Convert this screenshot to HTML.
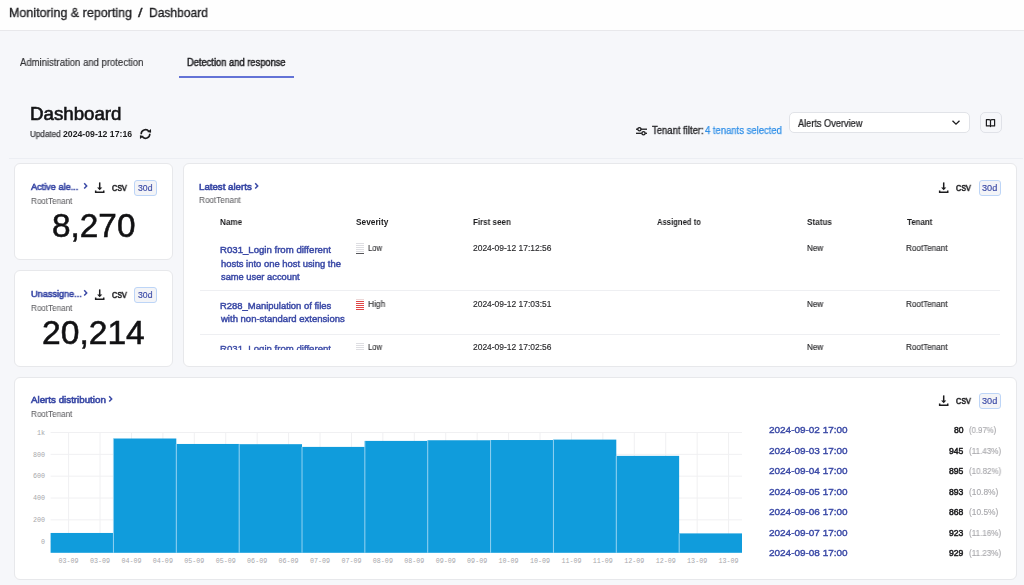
<!DOCTYPE html>
<html><head><meta charset="utf-8"><style>
html,body{margin:0;padding:0;}
body{width:1024px;height:585px;overflow:hidden;position:relative;background:#f6f7fa;font-family:"Liberation Sans",sans-serif;}
.t{position:absolute;white-space:pre;transform-origin:0 0;will-change:transform;}
.card{position:absolute;background:#fff;border:1px solid #e7e8eb;border-radius:6px;box-sizing:border-box;}
</style></head><body>
<div style="position:absolute;left:0;top:0;width:1024px;height:30px;background:#fefefe;border-bottom:1px solid #e8e8eb"></div>
<div style="position:absolute;left:179.2px;top:76px;width:114.5px;height:1.5px;background:#6373d6"></div>
<div style="position:absolute;left:9px;top:158px;width:1014px;height:1px;background:#eceef3"></div>
<svg style="position:absolute;left:139px;top:128px" width="13" height="12" viewBox="0 0 13 12"><path d="M2.2 6.2A4.3 4.3 0 0 1 9.9 3.4" stroke="#1c1c1e" stroke-width="1.6" fill="none"/><path d="M8.2 3.9L12.1 4.7L12.0 0.9Z" fill="#1c1c1e"/><path d="M10.8 5.8A4.3 4.3 0 0 1 3.1 8.6" stroke="#1c1c1e" stroke-width="1.6" fill="none"/><path d="M4.8 8.1L0.9 7.3L1.0 11.1Z" fill="#1c1c1e"/></svg>
<svg style="position:absolute;left:635px;top:126px" width="13" height="10" viewBox="0 0 13 10"><path d="M1 3.2H12" stroke="#1c1c1e" stroke-width="1.3"/><circle cx="4.4" cy="3.2" r="1.6" fill="#f6f7fa" stroke="#1c1c1e" stroke-width="1.3"/><path d="M1 7.3H12" stroke="#1c1c1e" stroke-width="1.3"/><circle cx="8.5" cy="7.3" r="1.6" fill="#f6f7fa" stroke="#1c1c1e" stroke-width="1.3"/></svg>
<div style="position:absolute;left:789px;top:112px;width:181px;height:21px;box-sizing:border-box;background:#fff;border:1px solid #e1e3e8;border-radius:5px"></div>
<svg style="position:absolute;left:951px;top:119px" width="10" height="7" viewBox="0 0 10 7"><path d="M1.5 1.7L5 5.2L8.5 1.7" stroke="#1c1c1e" stroke-width="1.3" fill="none"/></svg>
<div style="position:absolute;left:980px;top:112px;width:22px;height:21px;box-sizing:border-box;background:#f6f7fa;border:1px solid #e0e2e8;border-radius:5px"></div>
<svg style="position:absolute;left:985px;top:118px" width="11" height="10" viewBox="0 0 11 10"><path d="M1.4 1.6H4.2Q5.5 1.6 5.5 2.9V8.6Q5.5 7.9 4.2 7.9H1.4Z M9.6 1.6H6.8Q5.5 1.6 5.5 2.9V8.6Q5.5 7.9 6.8 7.9H9.6Z" stroke="#1c1c1e" stroke-width="1.2" fill="none" stroke-linejoin="round"/></svg>

<div class="card" style="left:14px;top:163px;width:159px;height:97px"></div>
<div class="card" style="left:14px;top:270px;width:159px;height:97px"></div>
<div class="card" style="left:183px;top:163px;width:834px;height:204px"></div>
<div class="card" style="left:14px;top:377px;width:1003px;height:203px"></div>

<svg style="position:absolute;left:83.0px;top:182.2px" width="5" height="8" viewBox="0 0 5 8"><path d="M1.2 1.2L3.7 3.9L1.2 6.6" stroke="#3a49a6" stroke-width="1.5" fill="none"/></svg><svg style="position:absolute;left:93.6px;top:181.6px" width="12" height="12" viewBox="0 0 12 12"><path d="M5.7 0.4V6.4" stroke="#1c1c1e" stroke-width="1.5" fill="none"/><path d="M3.1 5.5L5.7 8.3L8.3 5.5Z" fill="#1c1c1e"/><path d="M1.65 8.4V10.15H9.75V8.4" stroke="#1c1c1e" stroke-width="1.5" fill="none"/></svg><div style="position:absolute;left:134.2px;top:179.9px;width:22.6px;height:16.2px;box-sizing:border-box;border:1px solid #bdd5f7;border-radius:3px;background:#f3f4f7"></div>
<svg style="position:absolute;left:83.0px;top:289.2px" width="5" height="8" viewBox="0 0 5 8"><path d="M1.2 1.2L3.7 3.9L1.2 6.6" stroke="#3a49a6" stroke-width="1.5" fill="none"/></svg><svg style="position:absolute;left:93.6px;top:288.6px" width="12" height="12" viewBox="0 0 12 12"><path d="M5.7 0.4V6.4" stroke="#1c1c1e" stroke-width="1.5" fill="none"/><path d="M3.1 5.5L5.7 8.3L8.3 5.5Z" fill="#1c1c1e"/><path d="M1.65 8.4V10.15H9.75V8.4" stroke="#1c1c1e" stroke-width="1.5" fill="none"/></svg><div style="position:absolute;left:134.2px;top:286.9px;width:22.6px;height:16.2px;box-sizing:border-box;border:1px solid #bdd5f7;border-radius:3px;background:#f3f4f7"></div>
<svg style="position:absolute;left:253.5px;top:182.4px" width="5" height="8" viewBox="0 0 5 8"><path d="M1.2 1.2L3.7 3.9L1.2 6.6" stroke="#3a49a6" stroke-width="1.5" fill="none"/></svg><svg style="position:absolute;left:938.2px;top:181.6px" width="12" height="12" viewBox="0 0 12 12"><path d="M5.7 0.4V6.4" stroke="#1c1c1e" stroke-width="1.5" fill="none"/><path d="M3.1 5.5L5.7 8.3L8.3 5.5Z" fill="#1c1c1e"/><path d="M1.65 8.4V10.15H9.75V8.4" stroke="#1c1c1e" stroke-width="1.5" fill="none"/></svg><div style="position:absolute;left:978.6px;top:180.0px;width:22.6px;height:16.2px;box-sizing:border-box;border:1px solid #bdd5f7;border-radius:3px;background:#f3f4f7"></div>
<svg style="position:absolute;left:108.3px;top:395.3px" width="5" height="8" viewBox="0 0 5 8"><path d="M1.2 1.2L3.7 3.9L1.2 6.6" stroke="#3a49a6" stroke-width="1.5" fill="none"/></svg><svg style="position:absolute;left:938.2px;top:395.0px" width="12" height="12" viewBox="0 0 12 12"><path d="M5.7 0.4V6.4" stroke="#1c1c1e" stroke-width="1.5" fill="none"/><path d="M3.1 5.5L5.7 8.3L8.3 5.5Z" fill="#1c1c1e"/><path d="M1.65 8.4V10.15H9.75V8.4" stroke="#1c1c1e" stroke-width="1.5" fill="none"/></svg><div style="position:absolute;left:978.6px;top:393.2px;width:22.6px;height:16.2px;box-sizing:border-box;border:1px solid #bdd5f7;border-radius:3px;background:#f3f4f7"></div>

<div style="position:absolute;left:200px;top:290.3px;width:800px;height:1px;background:#eeeff2"></div>
<div style="position:absolute;left:200px;top:334px;width:800px;height:1px;background:#eeeff2"></div>

<div style="position:absolute;left:356px;top:243px;width:8px;height:1px;background:#dedee2"></div><div style="position:absolute;left:356px;top:245px;width:8px;height:1px;background:#dedee2"></div><div style="position:absolute;left:356px;top:247px;width:8px;height:1px;background:#dedee2"></div><div style="position:absolute;left:356px;top:249px;width:8px;height:1px;background:#dedee2"></div><div style="position:absolute;left:356px;top:251px;width:8px;height:1px;background:#dedee2"></div><div style="position:absolute;left:356px;top:253px;width:8px;height:1px;background:#56565a"></div><div style="position:absolute;left:356px;top:299px;width:8px;height:1px;background:#ecd6d6"></div><div style="position:absolute;left:356px;top:301px;width:8px;height:1px;background:#e04646"></div><div style="position:absolute;left:356px;top:303px;width:8px;height:1px;background:#e04646"></div><div style="position:absolute;left:356px;top:305px;width:8px;height:1px;background:#e04646"></div><div style="position:absolute;left:356px;top:307px;width:8px;height:1px;background:#e04646"></div><div style="position:absolute;left:356px;top:309px;width:8px;height:1px;background:#e04646"></div><div style="position:absolute;left:356px;top:343px;width:8px;height:1px;background:#dedee2"></div><div style="position:absolute;left:356px;top:345px;width:8px;height:1px;background:#dedee2"></div><div style="position:absolute;left:356px;top:347px;width:8px;height:1px;background:#dedee2"></div><div style="position:absolute;left:356px;top:349px;width:8px;height:1px;background:#dedee2"></div>

<svg width="1024" height="585" style="position:absolute;left:0;top:0">
<line x1="50.6" y1="432.50" x2="742.0" y2="432.50" stroke="#f0f0f2" stroke-width="1"/>
<line x1="50.6" y1="454.34" x2="742.0" y2="454.34" stroke="#f0f0f2" stroke-width="1"/>
<line x1="50.6" y1="476.18" x2="742.0" y2="476.18" stroke="#f0f0f2" stroke-width="1"/>
<line x1="50.6" y1="498.02" x2="742.0" y2="498.02" stroke="#f0f0f2" stroke-width="1"/>
<line x1="50.6" y1="519.86" x2="742.0" y2="519.86" stroke="#f0f0f2" stroke-width="1"/>
<line x1="50.6" y1="541.70" x2="742.0" y2="541.70" stroke="#f0f0f2" stroke-width="1"/>
<line x1="68.60" y1="432.5" x2="68.60" y2="552.8" stroke="#f0f0f2" stroke-width="1"/>
<line x1="100.03" y1="432.5" x2="100.03" y2="552.8" stroke="#f0f0f2" stroke-width="1"/>
<line x1="131.45" y1="432.5" x2="131.45" y2="552.8" stroke="#f0f0f2" stroke-width="1"/>
<line x1="162.88" y1="432.5" x2="162.88" y2="552.8" stroke="#f0f0f2" stroke-width="1"/>
<line x1="194.31" y1="432.5" x2="194.31" y2="552.8" stroke="#f0f0f2" stroke-width="1"/>
<line x1="225.74" y1="432.5" x2="225.74" y2="552.8" stroke="#f0f0f2" stroke-width="1"/>
<line x1="257.16" y1="432.5" x2="257.16" y2="552.8" stroke="#f0f0f2" stroke-width="1"/>
<line x1="288.59" y1="432.5" x2="288.59" y2="552.8" stroke="#f0f0f2" stroke-width="1"/>
<line x1="320.02" y1="432.5" x2="320.02" y2="552.8" stroke="#f0f0f2" stroke-width="1"/>
<line x1="351.45" y1="432.5" x2="351.45" y2="552.8" stroke="#f0f0f2" stroke-width="1"/>
<line x1="382.87" y1="432.5" x2="382.87" y2="552.8" stroke="#f0f0f2" stroke-width="1"/>
<line x1="414.30" y1="432.5" x2="414.30" y2="552.8" stroke="#f0f0f2" stroke-width="1"/>
<line x1="445.73" y1="432.5" x2="445.73" y2="552.8" stroke="#f0f0f2" stroke-width="1"/>
<line x1="477.15" y1="432.5" x2="477.15" y2="552.8" stroke="#f0f0f2" stroke-width="1"/>
<line x1="508.58" y1="432.5" x2="508.58" y2="552.8" stroke="#f0f0f2" stroke-width="1"/>
<line x1="540.01" y1="432.5" x2="540.01" y2="552.8" stroke="#f0f0f2" stroke-width="1"/>
<line x1="571.44" y1="432.5" x2="571.44" y2="552.8" stroke="#f0f0f2" stroke-width="1"/>
<line x1="602.86" y1="432.5" x2="602.86" y2="552.8" stroke="#f0f0f2" stroke-width="1"/>
<line x1="634.29" y1="432.5" x2="634.29" y2="552.8" stroke="#f0f0f2" stroke-width="1"/>
<line x1="665.72" y1="432.5" x2="665.72" y2="552.8" stroke="#f0f0f2" stroke-width="1"/>
<line x1="697.15" y1="432.5" x2="697.15" y2="552.8" stroke="#f0f0f2" stroke-width="1"/>
<line x1="728.57" y1="432.5" x2="728.57" y2="552.8" stroke="#f0f0f2" stroke-width="1"/>
<rect x="50.60" y="532.96" width="62.85" height="19.84" fill="#109cdc"/>
<rect x="113.45" y="438.51" width="62.85" height="114.29" fill="#109cdc"/>
<line x1="113.45" y1="438.51" x2="113.45" y2="552.8" stroke="#8fd0f0" stroke-width="1"/>
<rect x="176.31" y="443.97" width="62.85" height="108.83" fill="#109cdc"/>
<line x1="176.31" y1="443.97" x2="176.31" y2="552.8" stroke="#8fd0f0" stroke-width="1"/>
<rect x="239.16" y="444.18" width="62.85" height="108.62" fill="#109cdc"/>
<line x1="239.16" y1="444.18" x2="239.16" y2="552.8" stroke="#8fd0f0" stroke-width="1"/>
<rect x="302.02" y="446.91" width="62.85" height="105.89" fill="#109cdc"/>
<line x1="302.02" y1="446.91" x2="302.02" y2="552.8" stroke="#8fd0f0" stroke-width="1"/>
<rect x="364.87" y="440.91" width="62.85" height="111.89" fill="#109cdc"/>
<line x1="364.87" y1="440.91" x2="364.87" y2="552.8" stroke="#8fd0f0" stroke-width="1"/>
<rect x="427.73" y="440.25" width="62.85" height="112.55" fill="#109cdc"/>
<line x1="427.73" y1="440.25" x2="427.73" y2="552.8" stroke="#8fd0f0" stroke-width="1"/>
<rect x="490.58" y="440.03" width="62.85" height="112.77" fill="#109cdc"/>
<line x1="490.58" y1="440.03" x2="490.58" y2="552.8" stroke="#8fd0f0" stroke-width="1"/>
<rect x="553.44" y="439.60" width="62.85" height="113.20" fill="#109cdc"/>
<line x1="553.44" y1="439.60" x2="553.44" y2="552.8" stroke="#8fd0f0" stroke-width="1"/>
<rect x="616.29" y="455.87" width="62.85" height="96.93" fill="#109cdc"/>
<line x1="616.29" y1="455.87" x2="616.29" y2="552.8" stroke="#8fd0f0" stroke-width="1"/>
<rect x="679.15" y="533.40" width="62.85" height="19.40" fill="#109cdc"/>
<line x1="679.15" y1="533.40" x2="679.15" y2="552.8" stroke="#8fd0f0" stroke-width="1"/>
<text x="45" y="434.80" text-anchor="end" font-family="Liberation Mono" font-size="6.7" fill="#a8a8ac">1k</text>
<text x="45" y="456.64" text-anchor="end" font-family="Liberation Mono" font-size="6.7" fill="#a8a8ac">800</text>
<text x="45" y="478.48" text-anchor="end" font-family="Liberation Mono" font-size="6.7" fill="#a8a8ac">600</text>
<text x="45" y="500.32" text-anchor="end" font-family="Liberation Mono" font-size="6.7" fill="#a8a8ac">400</text>
<text x="45" y="522.16" text-anchor="end" font-family="Liberation Mono" font-size="6.7" fill="#a8a8ac">200</text>
<text x="45" y="544.00" text-anchor="end" font-family="Liberation Mono" font-size="6.7" fill="#a8a8ac">0</text>
<text x="68.60" y="563" text-anchor="middle" font-family="Liberation Mono" font-size="6.7" fill="#a8a8ac">03-09</text>
<text x="100.03" y="563" text-anchor="middle" font-family="Liberation Mono" font-size="6.7" fill="#a8a8ac">03-09</text>
<text x="131.45" y="563" text-anchor="middle" font-family="Liberation Mono" font-size="6.7" fill="#a8a8ac">04-09</text>
<text x="162.88" y="563" text-anchor="middle" font-family="Liberation Mono" font-size="6.7" fill="#a8a8ac">04-09</text>
<text x="194.31" y="563" text-anchor="middle" font-family="Liberation Mono" font-size="6.7" fill="#a8a8ac">05-09</text>
<text x="225.74" y="563" text-anchor="middle" font-family="Liberation Mono" font-size="6.7" fill="#a8a8ac">05-09</text>
<text x="257.16" y="563" text-anchor="middle" font-family="Liberation Mono" font-size="6.7" fill="#a8a8ac">06-09</text>
<text x="288.59" y="563" text-anchor="middle" font-family="Liberation Mono" font-size="6.7" fill="#a8a8ac">06-09</text>
<text x="320.02" y="563" text-anchor="middle" font-family="Liberation Mono" font-size="6.7" fill="#a8a8ac">07-09</text>
<text x="351.45" y="563" text-anchor="middle" font-family="Liberation Mono" font-size="6.7" fill="#a8a8ac">07-09</text>
<text x="382.87" y="563" text-anchor="middle" font-family="Liberation Mono" font-size="6.7" fill="#a8a8ac">08-09</text>
<text x="414.30" y="563" text-anchor="middle" font-family="Liberation Mono" font-size="6.7" fill="#a8a8ac">08-09</text>
<text x="445.73" y="563" text-anchor="middle" font-family="Liberation Mono" font-size="6.7" fill="#a8a8ac">09-09</text>
<text x="477.15" y="563" text-anchor="middle" font-family="Liberation Mono" font-size="6.7" fill="#a8a8ac">09-09</text>
<text x="508.58" y="563" text-anchor="middle" font-family="Liberation Mono" font-size="6.7" fill="#a8a8ac">10-09</text>
<text x="540.01" y="563" text-anchor="middle" font-family="Liberation Mono" font-size="6.7" fill="#a8a8ac">10-09</text>
<text x="571.44" y="563" text-anchor="middle" font-family="Liberation Mono" font-size="6.7" fill="#a8a8ac">11-09</text>
<text x="602.86" y="563" text-anchor="middle" font-family="Liberation Mono" font-size="6.7" fill="#a8a8ac">11-09</text>
<text x="634.29" y="563" text-anchor="middle" font-family="Liberation Mono" font-size="6.7" fill="#a8a8ac">12-09</text>
<text x="665.72" y="563" text-anchor="middle" font-family="Liberation Mono" font-size="6.7" fill="#a8a8ac">12-09</text>
<text x="697.15" y="563" text-anchor="middle" font-family="Liberation Mono" font-size="6.7" fill="#a8a8ac">13-09</text>
<text x="728.57" y="563" text-anchor="middle" font-family="Liberation Mono" font-size="6.7" fill="#a8a8ac">13-09</text>
</svg>
<div class="t" style="left:8.74px;top:5.70px;font-size:13px;line-height:13px;color:#1f1f22;transform:scaleX(0.9614);-webkit-text-stroke:0.35px #1f1f22;">Monitoring &amp; reporting</div>
<div class="t" style="left:137.90px;top:5.70px;font-size:13px;line-height:13px;color:#1f1f22;transform:scaleX(1.2432);-webkit-text-stroke:0.35px #1f1f22;">/</div>
<div class="t" style="left:148.97px;top:5.70px;font-size:13px;line-height:13px;color:#1f1f22;transform:scaleX(0.9277);-webkit-text-stroke:0.35px #1f1f22;">Dashboard</div>
<div class="t" style="left:20.30px;top:57.50px;font-size:10px;line-height:10px;color:#2e2e31;transform:scaleX(0.9523);-webkit-text-stroke:0.15px #2e2e31;">Administration and protection</div>
<div class="t" style="left:186.90px;top:57.80px;font-size:10px;line-height:10px;color:#1f1f22;transform:scaleX(0.9333);-webkit-text-stroke:0.45px #1f1f22;">Detection and response</div>
<div class="t" style="left:29.99px;top:104.60px;font-size:18.3px;line-height:18.3px;color:#141416;transform:scaleX(1.0231);-webkit-text-stroke:0.60px #141416;">Dashboard</div>
<div class="t" style="left:30.39px;top:130.20px;font-size:8.7px;line-height:8.7px;color:#3c3c40;transform:scaleX(0.9322);-webkit-text-stroke:0.25px #3c3c40;">Updated</div>
<div class="t" style="left:62.90px;top:130.20px;font-size:8.7px;line-height:8.7px;color:#1c1c1e;font-weight:700;">2024-09-12 17:16</div>
<div class="t" style="left:651.79px;top:125.75px;font-size:10px;line-height:10px;color:#222225;transform:scaleX(0.9486);-webkit-text-stroke:0.30px #222225;">Tenant filter:</div>
<div class="t" style="left:704.86px;top:125.75px;font-size:10px;line-height:10px;color:#2f8fe8;transform:scaleX(0.9471);-webkit-text-stroke:0.25px #2f8fe8;">4 tenants selected</div>
<div class="t" style="left:797.54px;top:117.60px;font-size:10.5px;line-height:10.5px;color:#222225;transform:scaleX(0.8749);-webkit-text-stroke:0.23px #222225;">Alerts Overview</div>
<div class="t" style="left:31.23px;top:182.20px;font-size:9.5px;line-height:9.5px;color:#3a49a6;transform:scaleX(0.9624);-webkit-text-stroke:0.60px #3a49a6;">Active ale...</div>
<div class="t" style="left:111.81px;top:183.70px;font-size:8.5px;line-height:8.5px;color:#2a2a2d;transform:scaleX(0.8476);-webkit-text-stroke:0.65px #2a2a2d;">CSV</div>
<div class="t" style="left:138.30px;top:183.80px;font-size:8.7px;line-height:8.7px;color:#3a49a6;transform:scaleX(0.9944);-webkit-text-stroke:0.15px #3a49a6;">30d</div>
<div class="t" style="left:30.98px;top:196.70px;font-size:8.5px;line-height:8.5px;color:#5c5c60;transform:scaleX(0.9506);-webkit-text-stroke:0.05px #5c5c60;">RootTenant</div>
<div class="t" style="left:51.66px;top:210.10px;font-size:32.9px;line-height:32.9px;color:#111113;transform:scaleX(1.0139);-webkit-text-stroke:0.55px #111113;">8,270</div>
<div class="t" style="left:30.55px;top:289.20px;font-size:9.5px;line-height:9.5px;color:#3a49a6;transform:scaleX(0.9626);-webkit-text-stroke:0.60px #3a49a6;">Unassigne...</div>
<div class="t" style="left:111.81px;top:290.70px;font-size:8.5px;line-height:8.5px;color:#2a2a2d;transform:scaleX(0.8476);-webkit-text-stroke:0.65px #2a2a2d;">CSV</div>
<div class="t" style="left:138.30px;top:290.80px;font-size:8.7px;line-height:8.7px;color:#3a49a6;transform:scaleX(0.9944);-webkit-text-stroke:0.15px #3a49a6;">30d</div>
<div class="t" style="left:30.98px;top:303.70px;font-size:8.5px;line-height:8.5px;color:#5c5c60;transform:scaleX(0.9506);-webkit-text-stroke:0.05px #5c5c60;">RootTenant</div>
<div class="t" style="left:42.02px;top:317.10px;font-size:32.9px;line-height:32.9px;color:#111113;transform:scaleX(1.0217);-webkit-text-stroke:0.55px #111113;">20,214</div>
<div class="t" style="left:199.31px;top:182.20px;font-size:9.5px;line-height:9.5px;color:#3a49a6;transform:scaleX(1.0187);-webkit-text-stroke:0.60px #3a49a6;">Latest alerts</div>
<div class="t" style="left:199.17px;top:196.30px;font-size:8.5px;line-height:8.5px;color:#5c5c60;transform:scaleX(0.9600);-webkit-text-stroke:0.05px #5c5c60;">RootTenant</div>
<div class="t" style="left:955.91px;top:183.70px;font-size:8.5px;line-height:8.5px;color:#2a2a2d;transform:scaleX(0.8476);-webkit-text-stroke:0.65px #2a2a2d;">CSV</div>
<div class="t" style="left:982.28px;top:183.80px;font-size:8.7px;line-height:8.7px;color:#3a49a6;transform:scaleX(1.0529);-webkit-text-stroke:0.15px #3a49a6;">30d</div>
<div class="t" style="left:220.41px;top:217.70px;font-size:8.3px;line-height:8.3px;color:#1c1c1e;font-weight:700;transform:scaleX(0.9776);">Name</div>
<div class="t" style="left:356.40px;top:217.70px;font-size:8.3px;line-height:8.3px;color:#1c1c1e;font-weight:700;transform:scaleX(0.9943);">Severity</div>
<div class="t" style="left:472.72px;top:217.70px;font-size:8.3px;line-height:8.3px;color:#1c1c1e;font-weight:700;transform:scaleX(0.9623);">First seen</div>
<div class="t" style="left:657.02px;top:217.70px;font-size:8.3px;line-height:8.3px;color:#1c1c1e;font-weight:700;transform:scaleX(0.9229);">Assigned to</div>
<div class="t" style="left:807.40px;top:217.70px;font-size:8.3px;line-height:8.3px;color:#1c1c1e;font-weight:700;transform:scaleX(0.9779);">Status</div>
<div class="t" style="left:907.00px;top:217.70px;font-size:8.3px;line-height:8.3px;color:#1c1c1e;font-weight:700;transform:scaleX(0.9500);">Tenant</div>
<div class="t" style="left:220.42px;top:246.40px;font-size:9.2px;line-height:9.2px;color:#3a49a6;transform:scaleX(1.0460);-webkit-text-stroke:0.45px #3a49a6;">R031_Login from different</div>
<div class="t" style="left:220.54px;top:259.70px;font-size:9.2px;line-height:9.2px;color:#3a49a6;transform:scaleX(1.0249);-webkit-text-stroke:0.45px #3a49a6;">hosts into one host using the</div>
<div class="t" style="left:220.95px;top:272.80px;font-size:9.2px;line-height:9.2px;color:#3a49a6;transform:scaleX(1.0133);-webkit-text-stroke:0.45px #3a49a6;">same user account</div>
<div class="t" style="left:368.35px;top:244.20px;font-size:8.6px;line-height:8.6px;color:#2a2a2d;transform:scaleX(0.8935);-webkit-text-stroke:0.10px #2a2a2d;">Low</div>
<div class="t" style="left:472.79px;top:243.80px;font-size:8.3px;line-height:8.3px;color:#2a2a2d;transform:scaleX(1.0176);-webkit-text-stroke:0.15px #2a2a2d;">2024-09-12 17:12:56</div>
<div class="t" style="left:807.02px;top:243.80px;font-size:8.3px;line-height:8.3px;color:#2a2a2d;transform:scaleX(0.9745);-webkit-text-stroke:0.15px #2a2a2d;">New</div>
<div class="t" style="left:906.41px;top:243.80px;font-size:8.3px;line-height:8.3px;color:#2a2a2d;transform:scaleX(0.9774);-webkit-text-stroke:0.15px #2a2a2d;">RootTenant</div>
<div class="t" style="left:220.43px;top:302.20px;font-size:9.2px;line-height:9.2px;color:#3a49a6;transform:scaleX(1.0277);-webkit-text-stroke:0.45px #3a49a6;">R288_Manipulation of files</div>
<div class="t" style="left:221.25px;top:315.30px;font-size:9.2px;line-height:9.2px;color:#3a49a6;transform:scaleX(1.0354);-webkit-text-stroke:0.45px #3a49a6;">with non-standard extensions</div>
<div class="t" style="left:368.29px;top:300.30px;font-size:8.6px;line-height:8.6px;color:#2a2a2d;transform:scaleX(0.9725);-webkit-text-stroke:0.10px #2a2a2d;">High</div>
<div class="t" style="left:472.79px;top:299.80px;font-size:8.3px;line-height:8.3px;color:#2a2a2d;transform:scaleX(1.0176);-webkit-text-stroke:0.15px #2a2a2d;">2024-09-12 17:03:51</div>
<div class="t" style="left:807.02px;top:299.80px;font-size:8.3px;line-height:8.3px;color:#2a2a2d;transform:scaleX(0.9745);-webkit-text-stroke:0.15px #2a2a2d;">New</div>
<div class="t" style="left:906.41px;top:299.80px;font-size:8.3px;line-height:8.3px;color:#2a2a2d;transform:scaleX(0.9774);-webkit-text-stroke:0.15px #2a2a2d;">RootTenant</div>
<div class="t" style="left:220.37px;top:345.30px;font-size:9.2px;line-height:9.2px;color:#3a49a6;transform:scaleX(1.0469);-webkit-text-stroke:0.35px #3a49a6;height:5.10px;overflow:hidden;">R031_Login from different</div>
<div class="t" style="left:368.35px;top:343.20px;font-size:8.6px;line-height:8.6px;color:#2a2a2d;transform:scaleX(0.8935);-webkit-text-stroke:0.10px #2a2a2d;">Low</div>
<div class="t" style="left:472.79px;top:342.90px;font-size:8.3px;line-height:8.3px;color:#2a2a2d;transform:scaleX(1.0176);-webkit-text-stroke:0.15px #2a2a2d;">2024-09-12 17:02:56</div>
<div class="t" style="left:807.02px;top:342.90px;font-size:8.3px;line-height:8.3px;color:#2a2a2d;transform:scaleX(0.9745);-webkit-text-stroke:0.15px #2a2a2d;">New</div>
<div class="t" style="left:906.41px;top:342.90px;font-size:8.3px;line-height:8.3px;color:#2a2a2d;transform:scaleX(0.9774);-webkit-text-stroke:0.15px #2a2a2d;">RootTenant</div>
<div class="t" style="left:31.12px;top:395.40px;font-size:9.5px;line-height:9.5px;color:#3a49a6;transform:scaleX(1.0272);-webkit-text-stroke:0.60px #3a49a6;">Alerts distribution</div>
<div class="t" style="left:30.98px;top:409.70px;font-size:8.5px;line-height:8.5px;color:#5c5c60;transform:scaleX(0.9506);-webkit-text-stroke:0.05px #5c5c60;">RootTenant</div>
<div class="t" style="left:955.91px;top:396.75px;font-size:8.5px;line-height:8.5px;color:#2a2a2d;transform:scaleX(0.8476);-webkit-text-stroke:0.65px #2a2a2d;">CSV</div>
<div class="t" style="left:982.28px;top:396.90px;font-size:8.7px;line-height:8.7px;color:#3a49a6;transform:scaleX(1.0529);-webkit-text-stroke:0.15px #3a49a6;">30d</div>
<div class="t" style="left:768.81px;top:425.30px;font-size:9.7px;line-height:9.7px;color:#3a49a6;transform:scaleX(1.0271);-webkit-text-stroke:0.40px #3a49a6;">2024-09-02 17:00</div>
<div class="t" style="left:954.14px;top:426.10px;font-size:8.6px;line-height:8.6px;color:#1c1c1e;-webkit-text-stroke:0.50px #1c1c1e;">80</div>
<div class="t" style="left:968.74px;top:426.10px;font-size:8.4px;line-height:8.4px;color:#a9a9ad;transform:scaleX(0.9291);-webkit-text-stroke:0.15px #a9a9ad;">(0.97%)</div>
<div class="t" style="left:768.81px;top:445.83px;font-size:9.7px;line-height:9.7px;color:#3a49a6;transform:scaleX(1.0271);-webkit-text-stroke:0.40px #3a49a6;">2024-09-03 17:00</div>
<div class="t" style="left:949.36px;top:446.63px;font-size:8.6px;line-height:8.6px;color:#1c1c1e;-webkit-text-stroke:0.50px #1c1c1e;">945</div>
<div class="t" style="left:968.72px;top:446.63px;font-size:8.4px;line-height:8.4px;color:#a9a9ad;transform:scaleX(0.9642);-webkit-text-stroke:0.15px #a9a9ad;">(11.43%)</div>
<div class="t" style="left:768.81px;top:466.36px;font-size:9.7px;line-height:9.7px;color:#3a49a6;transform:scaleX(1.0271);-webkit-text-stroke:0.40px #3a49a6;">2024-09-04 17:00</div>
<div class="t" style="left:949.36px;top:467.16px;font-size:8.6px;line-height:8.6px;color:#1c1c1e;-webkit-text-stroke:0.50px #1c1c1e;">895</div>
<div class="t" style="left:968.73px;top:467.16px;font-size:8.4px;line-height:8.4px;color:#a9a9ad;transform:scaleX(0.9460);-webkit-text-stroke:0.15px #a9a9ad;">(10.82%)</div>
<div class="t" style="left:768.81px;top:486.89px;font-size:9.7px;line-height:9.7px;color:#3a49a6;transform:scaleX(1.0271);-webkit-text-stroke:0.40px #3a49a6;">2024-09-05 17:00</div>
<div class="t" style="left:949.36px;top:487.69px;font-size:8.6px;line-height:8.6px;color:#1c1c1e;-webkit-text-stroke:0.50px #1c1c1e;">893</div>
<div class="t" style="left:968.70px;top:487.69px;font-size:8.4px;line-height:8.4px;color:#a9a9ad;-webkit-text-stroke:0.15px #a9a9ad;">(10.8%)</div>
<div class="t" style="left:768.81px;top:507.42px;font-size:9.7px;line-height:9.7px;color:#3a49a6;transform:scaleX(1.0271);-webkit-text-stroke:0.40px #3a49a6;">2024-09-06 17:00</div>
<div class="t" style="left:949.36px;top:508.22px;font-size:8.6px;line-height:8.6px;color:#1c1c1e;-webkit-text-stroke:0.50px #1c1c1e;">868</div>
<div class="t" style="left:968.70px;top:508.22px;font-size:8.4px;line-height:8.4px;color:#a9a9ad;-webkit-text-stroke:0.15px #a9a9ad;">(10.5%)</div>
<div class="t" style="left:768.81px;top:527.95px;font-size:9.7px;line-height:9.7px;color:#3a49a6;transform:scaleX(1.0271);-webkit-text-stroke:0.40px #3a49a6;">2024-09-07 17:00</div>
<div class="t" style="left:949.36px;top:528.75px;font-size:8.6px;line-height:8.6px;color:#1c1c1e;-webkit-text-stroke:0.50px #1c1c1e;">923</div>
<div class="t" style="left:968.72px;top:528.75px;font-size:8.4px;line-height:8.4px;color:#a9a9ad;transform:scaleX(0.9642);-webkit-text-stroke:0.15px #a9a9ad;">(11.16%)</div>
<div class="t" style="left:768.81px;top:548.48px;font-size:9.7px;line-height:9.7px;color:#3a49a6;transform:scaleX(1.0271);-webkit-text-stroke:0.40px #3a49a6;">2024-09-08 17:00</div>
<div class="t" style="left:949.46px;top:549.28px;font-size:8.6px;line-height:8.6px;color:#1c1c1e;-webkit-text-stroke:0.50px #1c1c1e;">929</div>
<div class="t" style="left:968.72px;top:549.28px;font-size:8.4px;line-height:8.4px;color:#a9a9ad;transform:scaleX(0.9642);-webkit-text-stroke:0.15px #a9a9ad;">(11.23%)</div>
</body></html>
